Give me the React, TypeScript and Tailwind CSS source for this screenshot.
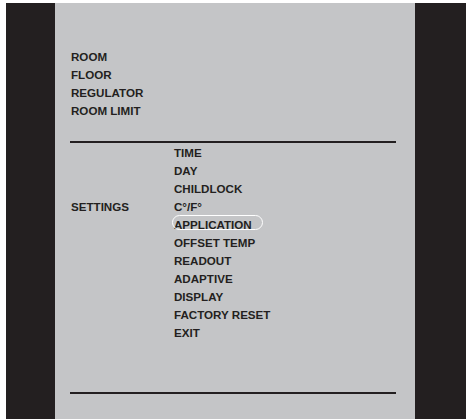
import React from "react";

const top = ["ROOM", "FLOOR", "REGULATOR", "ROOM LIMIT"];
const list = [
  "TIME",
  "DAY",
  "CHILDLOCK",
  "C°/F°",
  "APPLICATION",
  "OFFSET TEMP",
  "READOUT",
  "ADAPTIVE",
  "DISPLAY",
  "FACTORY RESET",
  "EXIT",
];

export default function App() {
  return (
    <div
      className="w-[466px] h-[419px] bg-white pt-[3px] pl-[6px] flex overflow-hidden"
      style={{ fontFamily: '"Liberation Sans", Arial, sans-serif' }}
    >
      <div className="w-[49px] h-full bg-[#231f20]" />
      <div className="w-[360px] h-full bg-[#c4c5c7] pl-[15px] pr-[19px] pt-[45px] flex flex-col text-[11.6px] font-bold leading-[18px] text-[#231f20]">
        <div className="flex flex-col pl-[1px]">
          {top.map((t) => (
            <div key={t} className="h-[18px]">
              {t}
            </div>
          ))}
        </div>
        <div className="mt-[21px] h-[2px] bg-[#231f20]" />
        <div className="mt-[1px] flex">
          <div className="w-[104px] pl-[1px] pt-[54px]">SETTINGS</div>
          <div className="flex flex-col">
            {list.map((t) => (
              <div key={t} className="h-[18px]">
                <span className="relative">
                  {t}
                  {t === "APPLICATION" && (
                    <span className="absolute left-[-2.5px] right-[-11px] top-[-3px] h-[15px] rounded-full border-[1.5px] border-white" />
                  )}
                </span>
              </div>
            ))}
          </div>
        </div>
        <div className="mt-[50px] h-[2px] bg-[#231f20]" />
      </div>
      <div className="flex-1 h-full bg-[#231f20]" />
    </div>
  );
}
